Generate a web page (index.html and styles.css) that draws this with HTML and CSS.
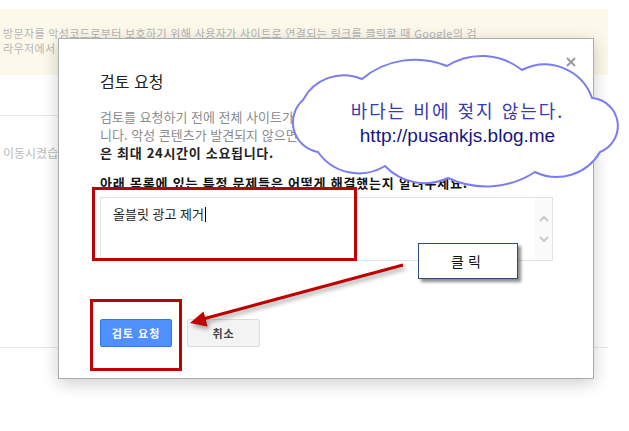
FILE: index.html
```html
<!DOCTYPE html>
<html lang="ko">
<head>
    <meta charset="UTF-8">
    <title>검토 요청</title>
    <link rel="stylesheet" href="styles.css">
</head>
<body>
    <div class="page">
        <div class="notice">
            <p>방문자를 악성코드로부터 보호하기 위해 사용자가 사이트로 연결되는 링크를 클릭할 때 Google의 검</p>
            <p>라우저에서 경고가 표시됩니다.</p>
        </div>
        <div class="rule"></div>
        <div class="list">
            <p>이동시켰습니다.</p>
        </div>
    </div>

    <div class="dialog">
        <span class="close">
            <svg width="10" height="10" viewBox="0 0 10 10"><path d="M1 1L9 9M9 1L1 9" stroke="#9a9a9a" stroke-width="2"/></svg>
        </span>
        <h2>검토 요청</h2>
        <p class="intro">
            검토를 요청하기 전에 전체 사이트가 안전한지 확인해야 합<br>
            니다. 악성 콘텐츠가 발견되지 않으면 경고가 삭제되며 <b>검토 과정</b><br>
            <b>은 최대 24시간이 소요됩니다.</b>
        </p>
        <p class="question">아래 목록에 있는 특정 문제들은 어떻게 해결했는지 알려주세요.</p>
        <div class="answer">
            <div class="answer-text">올블릿 광고 제거<span class="caret"></span></div>
            <div class="scroll">
                <svg width="10" height="7" viewBox="0 0 10 7"><path d="M1 6L5 2L9 6" fill="none" stroke="#c8c8c8" stroke-width="2"/></svg>
                <svg width="10" height="7" viewBox="0 0 10 7"><path d="M1 1L5 5L9 1" fill="none" stroke="#c8c8c8" stroke-width="2"/></svg>
            </div>
        </div>
        <div class="actions">
            <button class="btn btn-primary">검토 요청</button>
            <button class="btn">취소</button>
        </div>
    </div>

    <!-- annotations drawn over the screenshot -->
    <div class="mark mark-answer"></div>
    <div class="mark mark-submit"></div>

    <svg class="arrow" width="240" height="80" viewBox="180 255 240 80">
        <line x1="403" y1="265" x2="203" y2="319" stroke="#c00000" stroke-width="3"/>
        <polygon points="190,323 207.5,326.5 203.5,311.5" fill="#c00000"/>
    </svg>

    <div class="callout">클릭</div>

    <div class="cloud">
        <svg width="345" height="150" viewBox="285 45 345 150">
            <path d="M303,100 A46,46 0 0,1 362,79 A83,83 0 0,1 447,66 A65,65 0 0,1 522,70 A50,50 0 0,1 592,98 A28,28 0 0,1 600,152 A50,50 0 0,1 535,172 A90,90 0 0,1 448,178 A55,55 0 0,1 385,166 A50,50 0 0,1 318,152 A30,30 0 0,1 303,100 Z" fill="#fff" stroke="#7c7cf2" stroke-width="2"/>
        </svg>
        <div class="cloud-text">
            <p class="motto">바다는 비에 젖지 않는다.</p>
            <p class="url">http://pusankjs.blog.me</p>
        </div>
    </div>
</body>
</html>
```

FILE: styles.css
```css
body {
    margin: 0;
    width: 629px;
    height: 431px;
    overflow: hidden;
    position: relative;
    background: #fff;
    font-family: "Noto Sans CJK KR", "Noto Sans", sans-serif;
}
p {
    margin: 0;
}
.page {
    padding-top: 9px;
}
.notice {
    width: 608px;
    height: 66px;
    box-sizing: border-box;
    padding: 17px 0 0 3px;
    background: #fcf9ea;
    color: #b5b5b5;
    font-size: 11px;
    line-height: 15px;
    letter-spacing: 0.35px;
    white-space: nowrap;
    overflow: hidden;
}
.rule {
    width: 480px;
    margin-top: 40px;
    border-top: 1px solid #e8e8e8;
}
.list {
    width: 608px;
    height: 232px;
    box-sizing: border-box;
    padding: 29px 0 0 3px;
    border-bottom: 1px solid #e8e8e8;
    color: #bbb;
    font-size: 12px;
    line-height: 16px;
}
.dialog {
    position: absolute;
    left: 58px;
    top: 38px;
    width: 536px;
    height: 341px;
    box-sizing: border-box;
    padding: 32px 40px 0 41px;
    background: #fff;
    border: 1px solid #acacac;
    box-shadow: 0 4px 16px rgba(0, 0, 0, 0.2);
}
.close {
    position: absolute;
    top: 18px;
    right: 17px;
    line-height: 0;
}
.dialog h2 {
    margin: 0;
    font-size: 16px;
    line-height: 20px;
    font-weight: normal;
    color: #222;
}
.intro {
    margin-top: 17px;
    font-size: 13px;
    line-height: 18px;
    color: #8c8c8c;
    white-space: nowrap;
}
.intro b {
    color: #222;
    letter-spacing: 0.7px;
}
.question {
    margin-top: 12px;
    font-size: 13px;
    line-height: 18px;
    font-weight: bold;
    letter-spacing: 0.8px;
    color: #111;
    white-space: nowrap;
}
.answer {
    display: flex;
    width: 453px;
    height: 64px;
    margin-top: 5px;
    box-sizing: border-box;
    border: 1px solid #e2e2e2;
}
.answer-text {
    flex: 1;
    padding: 7px 12px;
    font-size: 13px;
    line-height: 18px;
    color: #222;
}
.caret {
    display: inline-block;
    width: 1px;
    height: 15px;
    margin-left: 1px;
    background: #000;
    vertical-align: -3px;
}
.scroll {
    width: 17px;
    display: flex;
    flex-direction: column;
    align-items: center;
    justify-content: center;
    gap: 14px;
    background: #fafafa;
}
.actions {
    display: flex;
    gap: 15px;
    margin-top: 58px;
}
.btn {
    width: 73px;
    height: 28px;
    padding: 0;
    border: 1px solid #dcdcdc;
    border-radius: 2px;
    background: #f3f3f3;
    color: #444;
    font-family: "Noto Sans CJK KR", sans-serif;
    font-size: 11px;
    font-weight: bold;
    letter-spacing: 1px;
}
.btn-primary {
    width: 72px;
    background: #4d90fe;
    border-color: #3079ed;
    color: #fff;
}
.mark {
    position: absolute;
    border: 3px solid #c00000;
}
.mark-answer {
    left: 92px;
    top: 187px;
    width: 259px;
    height: 68px;
}
.mark-submit {
    left: 90px;
    top: 299px;
    width: 86px;
    height: 66px;
}
.arrow {
    position: absolute;
    left: 180px;
    top: 255px;
    filter: drop-shadow(2px 3px 2px rgba(0, 0, 0, 0.35));
}
.callout {
    position: absolute;
    left: 418px;
    top: 243px;
    width: 100px;
    height: 36px;
    box-sizing: border-box;
    border: 1px solid #2c4c7c;
    background: #fff;
    box-shadow: 3px 3px 3px rgba(0, 0, 0, 0.45);
    display: flex;
    align-items: center;
    justify-content: center;
    font-size: 14px;
    letter-spacing: 4px;
    color: #111;
}
.cloud {
    position: absolute;
    left: 285px;
    top: 45px;
    width: 345px;
    height: 150px;
}
.cloud svg {
    position: absolute;
    left: 0;
    top: 0;
}
.cloud-text {
    position: relative;
    height: 100%;
    box-sizing: border-box;
    padding-top: 5px;
    display: flex;
    flex-direction: column;
    justify-content: center;
    align-items: center;
    line-height: 25px;
}
.motto {
    font-size: 18px;
    letter-spacing: 2px;
    color: #3a3ab0;
}
.url {
    font-family: "Liberation Sans", Arial, sans-serif;
    font-size: 19px;
    color: #151580;
}
```
